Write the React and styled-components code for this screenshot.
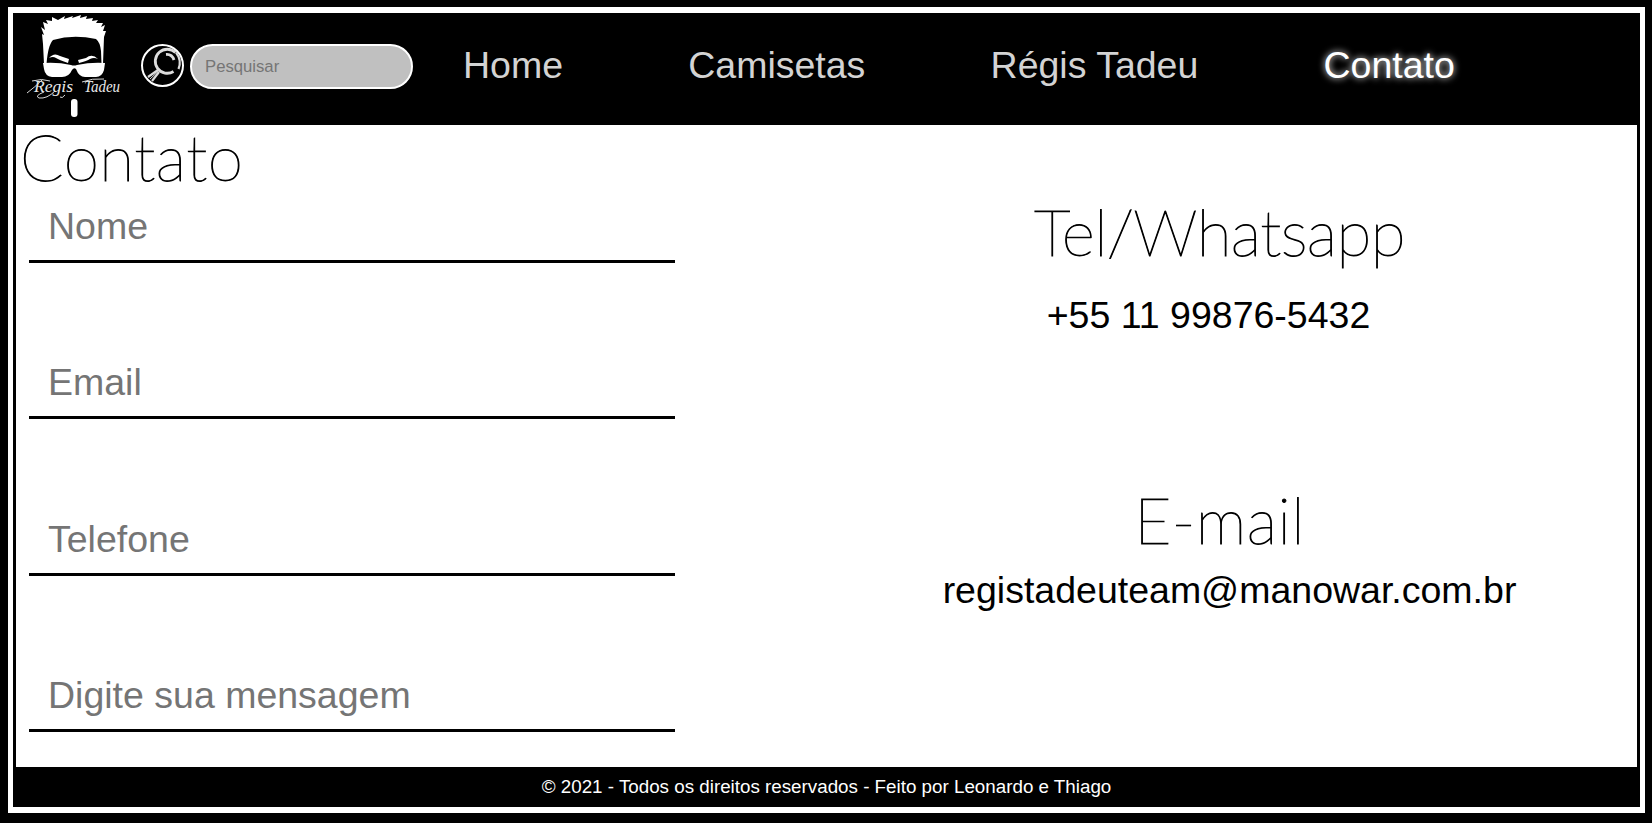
import React from "react";
import styled, { createGlobalStyle } from "styled-components";

const GlobalStyle = createGlobalStyle`
  * { box-sizing: border-box; }
  html, body { margin: 0; padding: 0; background: #000; }
  body { font-family: "Liberation Sans", Arial, sans-serif; overflow: hidden; }
`;

const Page = styled.div`
  height: 823px;
  padding: 7px 7px 10px 8px;
  background: #000;
`;

const Frame = styled.div`
  display: flex;
  flex-direction: column;
  height: 806px;
  border: solid #fff;
  border-width: 6px 5px;
  background: #000;
`;

const Header = styled.header`
  display: flex;
  align-items: center;
  flex: 0 0 112px;
  padding-left: 11px;
`;

const LogoSvg = styled.svg`
  width: 100px;
  height: 112px;
  flex: none;
  overflow: visible;
`;

const LogoText = styled.text`
  font-family: "Liberation Serif", serif;
  font-style: italic;
  font-size: 16px;
  fill: #e8e8e8;
`;

const SearchForm = styled.form`
  display: flex;
  align-items: flex-start;
  gap: 6px;
  margin: -5px 0 0 17px;
`;

const SearchIcon = styled.svg`
  width: 43px;
  height: 43px;
  flex: none;
`;

const SearchInput = styled.input`
  width: 223px;
  height: 45px;
  padding: 0 0 0 13px;
  border: 2px solid #fff;
  border-radius: 23px;
  background: silver;
  font: 16.7px "Liberation Sans", Arial, sans-serif;
  outline: none;
  &::placeholder { color: #757575; opacity: 1; }
`;

const Nav = styled.nav`
  display: flex;
  gap: 125.2px;
  margin: -8px 0 0 50px;
`;

const NavLink = styled.a`
  font-size: 37.5px;
  line-height: 44px;
  white-space: nowrap;
  text-decoration: none;
  color: ${(p) => (p.$active ? "#fff" : "lightgray")};
  text-shadow: ${(p) => (p.$active ? "0 0 7px #fff" : "none")};
`;

const Main = styled.main`
  display: flex;
  flex: 0 0 642px;
  margin: 0 3px;
  background: #fff;
`;

const FormColumn = styled.section`
  width: 811px;
  padding-left: 4px;
`;

const Title = styled.h1`
  margin: 0;
  font-family: Lato, sans-serif;
  font-size: 64px;
  font-weight: 100;
  line-height: 63px;
  letter-spacing: ${(p) => p.$spacing}px;
  -webkit-text-stroke: 1px #000;
  white-space: nowrap;
  color: #000;
`;

const Fields = styled.form`
  display: flex;
  flex-direction: column;
  gap: 91.33px;
  padding: 10px 0 0 9px;
`;

const Field = styled.input`
  width: 646px;
  height: 65px;
  padding: 0 0 5px 19px;
  border: 0;
  border-bottom: 3px solid #000;
  background: transparent;
  font: 37.5px "Liberation Sans", Arial, sans-serif;
  outline: none;
  &::placeholder { color: #757575; opacity: 1; }
`;

const InfoColumn = styled.section`
  flex: 1;
  display: flex;
  flex-direction: column;
  gap: 151px;
  padding: 75px 25px 0 0;
`;

const InfoBlock = styled.div`
  display: flex;
  flex-direction: column;
  align-items: center;
  gap: ${(p) => p.$gap}px;
`;

const InfoText = styled.p`
  margin: 0;
  padding-${(p) => p.$side}: ${(p) => (p.$side === "right" ? 22 : 20)}px;
  font-size: 37.5px;
  line-height: 44px;
  white-space: nowrap;
  color: #000;
`;

const Footer = styled.footer`
  flex: 1;
  display: flex;
  justify-content: center;
  align-items: center;
  font-size: 18.8px;
  color: #fff;
`;

const Logo = () => (
  <LogoSvg viewBox="24 13 100 112">
    <path
      fill="#fff"
      d="M44 64 L43 44 L42 34 L44 35 L41 27 L45 30 L43 22 L48 24 L46 20 L52 21 L52 17 L58 20 L65 16 L64 19 L73 16 L72 18 L81 15 L80 18 L87 16 L86 19 L93 18 L92 21 L98 20 L96 23 L103 23 L101 27 L105 25 L103 31 L106 31 L104 37 L103 64 L101.500 64 L101 51 Q100 42 96 39 Q73 34 53 40 Q48 45 46.500 64 Z"
    />
    <path fill="#fff" d="M49 58 Q54 52 60 56 L69 59 L68 63 Q59 60 56 58 Q53 56 49 58Z" />
    <path fill="#fff" d="M98 59 Q92 53 86 58 L78 60 L79 63 Q87 61 90 59 Q94 57 98 59Z" />
    <path
      fill="#fff"
      d="M43 63 Q58 62 71 65 Q74 66 77 65 Q91 62 105 63 L104 70 Q102 77 96 77 L85 77 Q79 77 76 69 Q74 67 72 70 Q69 77 62 77 L52 77 Q45 76 44 69 Z"
    />
    <LogoText x="34" y="92" textLength="39" lengthAdjust="spacingAndGlyphs">Regis</LogoText>
    <LogoText x="84" y="92" textLength="36" lengthAdjust="spacingAndGlyphs">Tadeu</LogoText>
    <path
      fill="none"
      stroke="#d8d8d8"
      strokeWidth="1"
      d="M27 93 Q35 87 42 80 M32 81 Q42 78 50 81 M55 91 Q47 99 39 98 Q34 96 44 92 M60 97 Q62 99 65 95 M82 82 Q92 78 104 79"
    />
    <rect fill="#fff" x="71" y="99" width="6.500" height="18" rx="3" />
  </LogoSvg>
);

const Magnifier = () => (
  <SearchIcon viewBox="0 0 43 43" fill="none">
    <circle cx="21.500" cy="21.500" r="20.500" stroke="#fff" strokeWidth="2" />
    <g stroke="#dcdcdc" strokeWidth="2.800">
      <path d="M32.500 27.500 A12 12 0 1 1 34.500 8.500" />
      <path d="M25 10.500 Q31 10 33 16" />
      <path d="M35 8.500 Q41 16 37.500 25" strokeWidth="2.200" />
      <path d="M17 26 L7 33 M18 28 L11 37" strokeWidth="2.200" />
      <path d="M17 27.500 L9 35" strokeWidth="1" />
    </g>
  </SearchIcon>
);

const links = ["Home", "Camisetas", "Régis Tadeu", "Contato"];
const fields = ["Nome", "Email", "Telefone", "Digite sua mensagem"];

export default function App() {
  return (
    <>
      <GlobalStyle />
      <Page>
        <Frame>
          <Header>
            <Logo />
            <SearchForm>
              <Magnifier />
              <SearchInput placeholder="Pesquisar" />
            </SearchForm>
            <Nav>
              {links.map((l) => (
                <NavLink key={l} $active={l === "Contato"}>{l}</NavLink>
              ))}
            </Nav>
          </Header>
          <Main>
            <FormColumn>
              <Title $spacing={0.5}>Contato</Title>
              <Fields>
                {fields.map((f) => (
                  <Field key={f} placeholder={f} />
                ))}
              </Fields>
            </FormColumn>
            <InfoColumn>
              <InfoBlock $gap={30}>
                <Title as="h2" $spacing={-0.6}>Tel/Whatsapp</Title>
                <InfoText $side="right">+55 11 99876-5432</InfoText>
              </InfoBlock>
              <InfoBlock $gap={17}>
                <Title as="h2" $spacing={0.4}>E-mail</Title>
                <InfoText $side="left">registadeuteam@manowar.com.br</InfoText>
              </InfoBlock>
            </InfoColumn>
          </Main>
          <Footer>© 2021 - Todos os direitos reservados - Feito por Leonardo e Thiago</Footer>
        </Frame>
      </Page>
    </>
  );
}
